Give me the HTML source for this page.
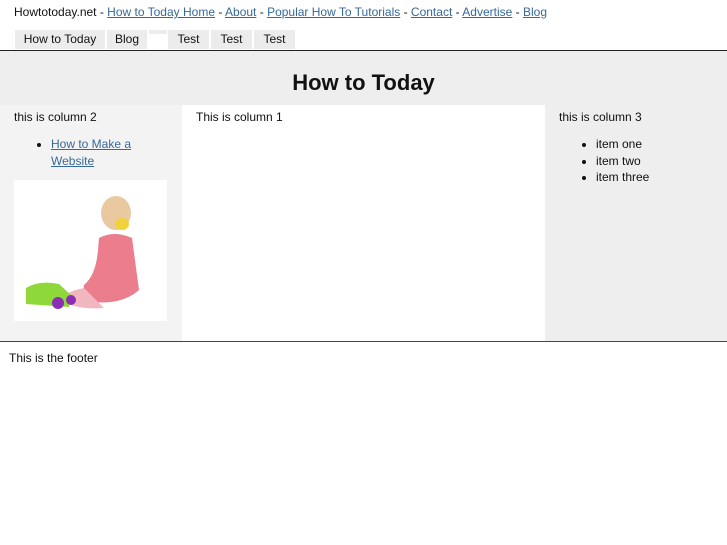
<!DOCTYPE html>
<html><head><style>
body{margin:0;width:727px;height:545px;background:#fff;font-family:"Liberation Sans",sans-serif;font-size:12px;color:#111;position:relative;overflow:hidden}
a{color:#36699a}
.abs{position:absolute}
.tab{position:absolute;top:30px;height:19px;background:#ececec;line-height:19px;text-align:center;font-size:12px}
ul{margin:0;padding:0 0 0 37px}
li{line-height:16.5px}
</style></head><body>
<div class="abs" style="left:14px;top:5px;line-height:14px">Howtotoday.net - <a href="#">How to Today Home</a> - <a href="#">About</a> - <a href="#">Popular How To Tutorials</a> - <a href="#">Contact</a> - <a href="#">Advertise</a> - <a href="#">Blog</a></div>
<div class="tab" style="left:15px;width:90px">How to Today</div>
<div class="tab" style="left:107px;width:40px">Blog</div>
<div class="tab" style="left:149px;width:18px;height:4px"></div>
<div class="tab" style="left:168px;width:41px">Test</div>
<div class="tab" style="left:211px;width:41px">Test</div>
<div class="tab" style="left:254px;width:41px">Test</div>
<div class="abs" style="left:0;top:50px;width:727px;height:1px;background:#222"></div>
<div class="abs" style="left:0;top:51px;width:727px;height:54px;background:#eee"></div>
<div class="abs" style="left:0;top:70px;width:727px;text-align:center;font-weight:bold;font-size:22px">How to Today</div>
<div class="abs" style="left:0;top:105px;width:182px;height:236px;background:#f3f3f3"></div>
<div class="abs" style="left:545px;top:105px;width:182px;height:236px;background:#eee"></div>
<div class="abs" style="left:0;top:341px;width:727px;height:1px;background:#444"></div>
<div class="abs" style="left:14px;top:110px">this is column 2</div>
<div class="abs" style="left:14px;top:136px;width:150px"><ul><li><a href="#">How to Make a Website</a></li></ul></div>
<div class="abs" style="left:14px;top:180px;width:153px;height:141px;background:#fff">
<svg width="153" height="141">
<ellipse cx="102" cy="33" rx="15" ry="17" fill="#e8c9a0"/>
<ellipse cx="108" cy="44" rx="7" ry="6" fill="#f2d23a"/>
<path d="M85 58 Q100 50 118 58 L125 110 Q108 125 80 122 Q68 118 70 105 Q82 95 84 70Z" fill="#ec7d8d"/>
<path d="M70 108 Q50 112 48 120 Q60 130 90 128Z" fill="#f2b6c0"/>
<path d="M12 108 Q25 100 45 104 L58 116 L55 127 L12 124Z" fill="#8fd83a"/>
<circle cx="44" cy="123" r="6" fill="#8a2eb5"/><circle cx="57" cy="120" r="5" fill="#8a2eb5"/>
</svg></div>
<div class="abs" style="left:196px;top:110px">This is column 1</div>
<div class="abs" style="left:559px;top:110px">this is column 3</div>
<div class="abs" style="left:559px;top:136px"><ul><li>item one</li><li>item two</li><li>item three</li></ul></div>
<div class="abs" style="left:9px;top:351px">This is the footer</div>
</body></html>
